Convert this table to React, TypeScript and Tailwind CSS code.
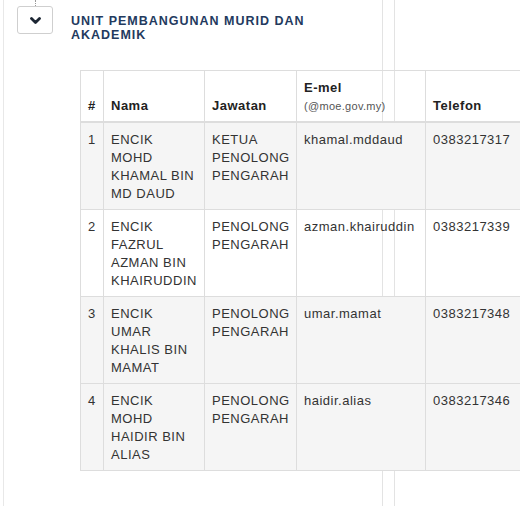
import React from "react";

type Row = { no: number; nama: string[]; jawatan: string[]; emel: string; tel: string; gray: boolean };

const rows: Row[] = [
  { no: 1, nama: ["ENCIK", "MOHD", "KHAMAL BIN", "MD DAUD"], jawatan: ["KETUA", "PENOLONG", "PENGARAH"], emel: "khamal.mddaud", tel: "0383217317", gray: true },
  { no: 2, nama: ["ENCIK", "FAZRUL", "AZMAN BIN", "KHAIRUDDIN"], jawatan: ["PENOLONG", "PENGARAH"], emel: "azman.khairuddin", tel: "0383217339", gray: false },
  { no: 3, nama: ["ENCIK", "UMAR", "KHALIS BIN", "MAMAT"], jawatan: ["PENOLONG", "PENGARAH"], emel: "umar.mamat", tel: "0383217348", gray: true },
  { no: 4, nama: ["ENCIK", "MOHD", "HAIDIR BIN", "ALIAS"], jawatan: ["PENOLONG", "PENGARAH"], emel: "haidir.alias", tel: "0383217346", gray: true },
];

const td = "border border-[#dddddd] align-top pt-2 pb-[6px] pl-[7px] pr-[6px] whitespace-nowrap";
const th = "border border-[#dddddd] border-b-2 align-bottom pt-2 pb-[6px] pl-[7px] pr-[6px] text-left font-bold text-[#222]";

export default function App() {
  return (
    <div className="relative w-[520px] h-[506px] overflow-hidden bg-white font-['Liberation_Sans',Arial,sans-serif]">
      <div className="absolute left-[382px] top-0 h-full w-px bg-[#e3e3e3]" />
      <div className="absolute left-[394px] top-0 h-full w-px bg-[#e3e3e3]" />
      <div className="relative ml-[3px] h-full border-l border-[#e8e8e8]">
        <div className="flex">
          <div className="ml-[13px] flex flex-col items-center">
            <div className="h-[6px] border-l border-dotted border-[#999]" />
            <div className="flex h-[28px] w-[36px] items-center justify-center rounded-[3px] border border-[#cfcfcf] bg-white">
              <svg width="11" height="8" viewBox="0 0 11 8" className="mt-px">
                <polyline points="1.5,1.5 5.5,5.5 9.5,1.5" fill="none" stroke="#1c2633" strokeWidth="2.8" strokeLinecap="round" strokeLinejoin="round" />
              </svg>
            </div>
          </div>
          <div className="ml-[18px] mt-[14px] text-[12.5px] font-bold leading-[14px] tracking-[1px] text-[#233a5e]">
            <div>UNIT PEMBANGUNAN MURID DAN</div>
            <div>AKADEMIK</div>
          </div>
        </div>
        <div className="ml-[76px] mt-[28px]">
          <table className="w-[441px] table-fixed border-collapse text-[13px] leading-[18px] tracking-[0.5px] text-[#333]">
            <colgroup>
              <col className="w-[23px]" />
              <col className="w-[101px]" />
              <col className="w-[92px]" />
              <col className="w-[129px]" />
              <col className="w-[96px]" />
            </colgroup>
            <thead>
              <tr>
                <th className={th}>#</th>
                <th className={th}>Nama</th>
                <th className={th}>Jawatan</th>
                <th className={th}>
                  <div>E-mel</div>
                  <div className="text-[11px] font-normal text-[#555] tracking-[0.3px]">(@moe.gov.my)</div>
                </th>
                <th className={th}>Telefon</th>
              </tr>
            </thead>
            <tbody>
              {rows.map((r) => (
                <tr key={r.no} className={r.gray ? "bg-[#f5f5f5]" : ""}>
                  <td className={td}>{r.no}</td>
                  <td className={td}>
                    {r.nama.map((n) => (
                      <div key={n}>{n}</div>
                    ))}
                  </td>
                  <td className={td}>
                    {r.jawatan.map((n) => (
                      <div key={n}>{n}</div>
                    ))}
                  </td>
                  <td className={td}>{r.emel}</td>
                  <td className={td}>{r.tel}</td>
                </tr>
              ))}
            </tbody>
          </table>
        </div>
      </div>
    </div>
  );
}
